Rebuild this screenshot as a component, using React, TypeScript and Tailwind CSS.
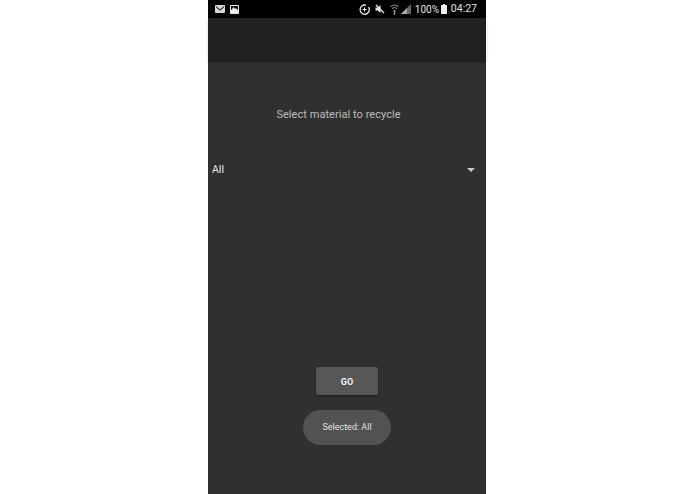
export default function App() {
  return (
    <div className="w-[695px] h-[494px] bg-white flex justify-center overflow-hidden font-['Roboto',sans-serif]">
      <div className="w-[278px] ml-[-1px] h-full bg-[#303030] flex flex-col">
        {/* status bar */}
        <div className="h-[18px] bg-black flex items-center pl-[7px] pr-[9px] text-[#e6e6e6]">
          <svg className="w-[10px] h-[8px]" viewBox="0 0 10 8">
            <rect width="10" height="8" rx="1" fill="#d8d8d8" />
            <path d="M1 1 5 4.2 9 1V2.6L5 5.8 1 2.6Z" fill="#333" />
          </svg>
          <svg className="w-[9px] h-[9px] ml-[5px]" viewBox="0 0 9 9">
            <rect width="9" height="9" rx="1" fill="#eee" />
            <rect x="1" y="1" width="7" height="4" fill="#111" />
            <path d="M1 5.5 3.5 2 5 4 6 3 8 5.5Z" fill="#eee" />
          </svg>
          <div className="ml-auto flex items-center">
            <svg className="w-[11px] h-[11px]" viewBox="0 0 11 11" fill="none" stroke="#eee" strokeWidth="1.3">
              <path d="M9.6 3.2A4.6 4.6 0 1 1 7 1.2" />
              <path d="M3.5 5.5h4M5.5 3.5v4" strokeWidth="1" />
            </svg>
            <svg className="w-[10px] h-[10px] ml-[5px]" viewBox="0 0 10 10" fill="#e6e6e6">
              <path d="M0.5 3.5H3L5.5 1V9L3 6.5H0.5Z" />
              <path d="M1 1 9 9" stroke="#e6e6e6" strokeWidth="1.4" />
            </svg>
            <svg className="w-[9px] h-[11px] ml-[5px]" viewBox="0 0 9 11" fill="none" stroke="#999" strokeWidth="1">
              <path d="M0.5 2.5Q4.5 -0.5 8.5 2.5M2 4.5Q4.5 2.5 7 4.5" />
              <path d="M3.5 6h2L5 11H4Z" fill="#999" stroke="none" />
            </svg>
            <svg className="w-[10px] h-[10px] ml-[2px]" viewBox="0 0 10 10">
              <path d="M10 0V10H0Z" fill="#666" />
              <path d="M6 4V10H0Z" fill="#aaa" />
            </svg>
            <span className="ml-[4px] mt-[1px] w-[24px] text-[10px] leading-none whitespace-nowrap">100%</span>
            <svg className="w-[6px] h-[10px] ml-[2px]" viewBox="0 0 6 10" fill="#eee">
              <path d="M2 0H4V1H6V10H0V1H2Z" />
            </svg>
            <span className="ml-[4px] mt-[1px] text-[10.5px] leading-none">04:27</span>
          </div>
        </div>

        {/* toolbar */}
        <div className="h-[44px] bg-[#212121] shadow-[0_1px_3px_rgba(0,0,0,0.15)]" />

        {/* content */}
        <div className="flex-1 flex flex-col items-center">
          <p className="mt-[45px] mr-[17px] text-[11px] leading-[16px] text-[#bdbdbd] tracking-[0.05px]">Select material to recycle</p>

          <div className="mt-[39px] w-full h-[16px] pl-[4px] pr-[11px] flex items-center justify-between">
            <span className="text-[10.5px] leading-none text-[#e8e8e8]">All</span>
            <span className="w-0 h-0 border-x-[4px] border-x-transparent border-t-[4px] border-t-[#c8c8c8]" />
          </div>

          <button className="mt-[189px] w-[62px] h-[28px] pt-[4px] rounded-[2px] bg-[#575757] text-[#eeeeee] text-[9px] font-bold shadow-[0_1px_2px_rgba(0,0,0,0.4)]">
            GO
          </button>

          <div className="mt-[15px] w-[88px] h-[35px] rounded-full bg-[#525252] text-[#e0e0e0] text-[9px] flex items-center justify-center">
            Selected: All
          </div>
        </div>
      </div>
    </div>
  )
}
